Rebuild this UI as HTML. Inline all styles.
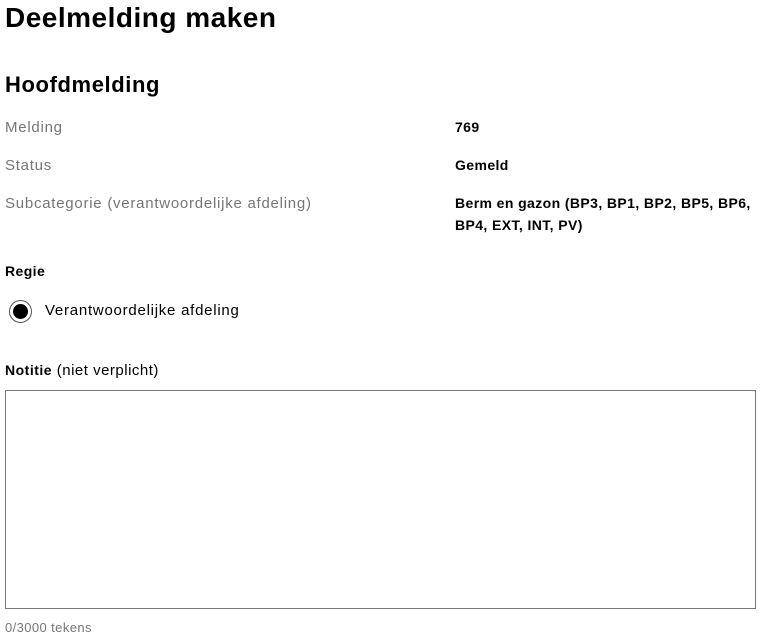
<!DOCTYPE html>
<html><head><meta charset="utf-8"><style>
body{margin:0;background:#fff;font-family:"Liberation Sans",sans-serif;color:#000;width:770px;height:640px;position:relative;overflow:hidden}
.a{position:absolute;white-space:nowrap}
h1{position:absolute;left:5px;top:1px;margin:0;font-size:28px;line-height:34px;font-weight:bold;letter-spacing:0.5px}
h2{position:absolute;left:5px;top:71px;margin:0;font-size:22px;line-height:28px;font-weight:bold;letter-spacing:0.6px}
.l{color:#767676;font-size:15px;left:5px;letter-spacing:0.75px}
.v{font-weight:bold;font-size:14px;left:455px;line-height:22px;letter-spacing:0.4px}
</style></head><body>
<h1>Deelmelding maken</h1>
<h2>Hoofdmelding</h2>
<div class="a l" style="top:119px">Melding</div>
<div class="a v" style="top:116px">769</div>
<div class="a l" style="top:157px">Status</div>
<div class="a v" style="top:154px">Gemeld</div>
<div class="a l" style="top:195px">Subcategorie (verantwoordelijke afdeling)</div>
<div class="a v" style="top:192px">Berm en gazon (BP3, BP1, BP2, BP5, BP6,<br>BP4, EXT, INT, PV)</div>
<div class="a" style="left:5px;top:263px;font-size:14px;font-weight:bold;letter-spacing:0.4px">Regie</div>
<div class="a" style="left:9px;top:300px;width:23px;height:23px;border:1.5px solid #555;border-radius:50%;box-sizing:border-box"><div style="position:absolute;left:2.5px;top:2.5px;width:15px;height:15px;border-radius:50%;background:#000"></div></div>
<div class="a" style="left:45px;top:302px;font-size:15px;letter-spacing:0.75px">Verantwoordelijke afdeling</div>
<div class="a" style="left:5px;top:362px;font-size:15px;letter-spacing:0.5px"><b style="font-size:14px">Notitie</b> (niet verplicht)</div>
<div class="a" style="left:5px;top:390px;width:751px;height:219px;border:1px solid #767676;box-sizing:border-box"></div>
<div class="a" style="left:5px;top:620px;font-size:13px;color:#767676;letter-spacing:0.4px">0/3000 tekens</div>
</body></html>
